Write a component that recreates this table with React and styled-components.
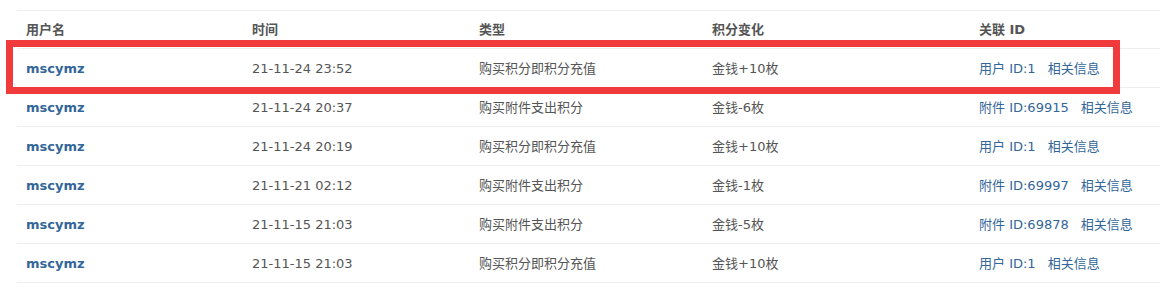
import React from 'react'
import styled, { createGlobalStyle } from 'styled-components'

const GlobalStyle = createGlobalStyle`
  body {
    margin: 0;
    background: #fff;
    font-family: "DejaVu Sans", Verdana, "Noto Sans CJK SC", sans-serif;
    font-size: 13px;
    color: #555;
  }
`

const rows = [
  { time: '21-11-24 23:52', type: '购买积分即积分充值', change: '金钱+10枚', ref: '用户 ID:1' },
  { time: '21-11-24 20:37', type: '购买附件支出积分', change: '金钱-6枚', ref: '附件 ID:69915' },
  { time: '21-11-24 20:19', type: '购买积分即积分充值', change: '金钱+10枚', ref: '用户 ID:1' },
  { time: '21-11-21 02:12', type: '购买附件支出积分', change: '金钱-1枚', ref: '附件 ID:69997' },
  { time: '21-11-15 21:03', type: '购买附件支出积分', change: '金钱-5枚', ref: '附件 ID:69878' },
  { time: '21-11-15 21:03', type: '购买积分即积分充值', change: '金钱+10枚', ref: '用户 ID:1' },
]

const App = () => {
  return (
    <>
      <GlobalStyle />
      <Page>
        <Table>
          <colgroup>
            <col style={{ width: 226 }} />
            <col style={{ width: 227 }} />
            <col style={{ width: 233 }} />
            <col style={{ width: 267 }} />
            <col />
          </colgroup>
          <thead>
            <tr>
              <Th>用户名</Th>
              <Th>时间</Th>
              <Th>类型</Th>
              <Th>积分变化</Th>
              <Th>关联 ID</Th>
            </tr>
          </thead>
          <tbody>
            {rows.map((r, i) => (
              <tr key={i}>
                <Td><User href="#">mscymz</User></Td>
                <Td>{r.time}</Td>
                <Td>{r.type}</Td>
                <Td>{r.change}</Td>
                <Td>
                  <Link href="#">{r.ref}</Link>
                  <Link href="#" $gap>相关信息</Link>
                </Td>
              </tr>
            ))}
          </tbody>
        </Table>
        <Highlight />
      </Page>
    </>
  )
}

const Page = styled.div`
  position: relative;
  padding: 10px 0 0 17px;
`

const Table = styled.table`
  width: 1143px;
  table-layout: fixed;
  border-collapse: separate;
  border-spacing: 0;

  th, td {
    border-bottom: 1px solid #eee;
  }
  th {
    border-top: 1px solid #eee;
  }
`

const Th = styled.th`
  padding: 11px 9px 10px;
  line-height: 16px;
  text-align: left;
  font-weight: bold;
  color: #555;
  white-space: nowrap;
`

const Td = styled.td`
  padding: 12px 9px 10px;
  line-height: 16px;
  color: #555;
  white-space: nowrap;
`

const User = styled.a`
  color: #336699;
  font-weight: bold;
  text-decoration: none;
`

const Link = styled.a`
  color: #336699;
  text-decoration: none;
  margin-left: ${(p) => (p.$gap ? '12px' : '0')};
`

const Highlight = styled.div`
  position: absolute;
  left: 6px;
  top: 40px;
  width: 1114px;
  height: 54px;
  box-sizing: border-box;
  border: 7px solid #f03a3c;
  pointer-events: none;
`

export default App
